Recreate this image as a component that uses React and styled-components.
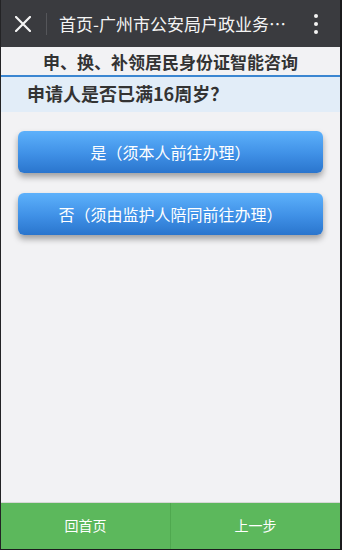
import React from "react";
import styled, { createGlobalStyle } from "styled-components";

const GlobalStyle = createGlobalStyle`
  html, body { margin: 0; padding: 0; background: #1f1f21; }
  body { font-family: "Noto Sans CJK SC", "Noto Sans", sans-serif; }
`;

const Frame = styled.div`
  height: 550px;
  box-sizing: border-box;
  border-left: 1px solid #232325;
  border-right: 2px solid #1b1b1d;
  border-bottom: 1px solid #1b1b1d;
  background: #f2f2f4;
  display: flex;
  flex-direction: column;
`;

const TopBar = styled.div`
  height: 47px;
  flex: none;
  background: #3a3b3f;
  display: flex;
  align-items: center;
  color: #f4f4f4;
`;

const CloseBtn = styled.div`
  width: 46px;
  height: 47px;
  display: flex;
  align-items: center;
  justify-content: center;
  margin-left: -1px;
`;

const Divider = styled.div`
  width: 1px;
  height: 22px;
  background: #55565a;
`;

const Title = styled.div`
  margin-left: 12px;
  font-size: 17px;
  white-space: nowrap;
`;

const MoreBtn = styled.div`
  width: 20px;
  margin-left: auto;
  margin-right: 14px;
  display: flex;
  flex-direction: column;
  align-items: center;
  gap: 4px;
  span {
    width: 4px;
    height: 4px;
    border-radius: 50%;
    background: #f4f4f4;
  }
`;

const Subtitle = styled.div`
  height: 28px;
  flex: none;
  border-bottom: 2px solid #3b86d1;
  display: flex;
  align-items: center;
  justify-content: center;
  font-size: 17px;
  font-weight: bold;
  color: #333;
  padding-top: 1px;
  box-sizing: content-box;
  margin-top: -1px;
`;

const Question = styled.div`
  height: 35px;
  flex: none;
  background: #e2edf8;
  padding-left: 26px;
  display: flex;
  align-items: center;
  font-size: 18px;
  font-weight: bold;
  color: #333;
  padding-bottom: 3px;
  box-sizing: border-box;
`;

const Options = styled.div`
  display: flex;
  flex-direction: column;
  gap: 20px;
  padding: 19px 17px 0 17px;
`;

const OptionButton = styled.button`
  height: 42px;
  border: none;
  border-radius: 6px;
  background: linear-gradient(to bottom, #5db1fb 0%, #3f90e6 55%, #2a75cd 100%);
  box-shadow: 0 4px 6px rgba(0, 0, 0, 0.35);
  color: #fff;
  font-family: inherit;
  font-size: 16px;
  padding: 0;
  cursor: pointer;
`;

const Spacer = styled.div`
  flex: 1;
`;

const Footer = styled.div`
  height: 47px;
  flex: none;
  border-top: 1px solid #d6d8d6;
  box-sizing: border-box;
  display: flex;
  background: #5cb85c;
`;

const FooterButton = styled.div`
  flex: 1;
  display: flex;
  align-items: center;
  justify-content: center;
  color: #fff;
  font-size: 14px;
  padding-bottom: 2px;
  & + & {
    border-left: 1px solid #4fa84f;
  }
`;

const XIcon = () => (
  <svg width="16" height="16" viewBox="0 0 16 16">
    <path d="M1 1L15 15M15 1L1 15" stroke="#f4f4f4" strokeWidth="2.2" strokeLinecap="square" />
  </svg>
);

export default function App() {
  return (
    <>
      <GlobalStyle />
      <Frame>
        <TopBar>
          <CloseBtn>
            <XIcon />
          </CloseBtn>
          <Divider />
          <Title>首页-广州市公安局户政业务⋯</Title>
          <MoreBtn>
            <span />
            <span />
            <span />
          </MoreBtn>
        </TopBar>
        <Subtitle>申、换、补领居民身份证智能咨询</Subtitle>
        <Question>申请人是否已满16周岁？</Question>
        <Options>
          <OptionButton>是（须本人前往办理）</OptionButton>
          <OptionButton>否（须由监护人陪同前往办理）</OptionButton>
        </Options>
        <Spacer />
        <Footer>
          <FooterButton>回首页</FooterButton>
          <FooterButton>上一步</FooterButton>
        </Footer>
      </Frame>
    </>
  );
}
